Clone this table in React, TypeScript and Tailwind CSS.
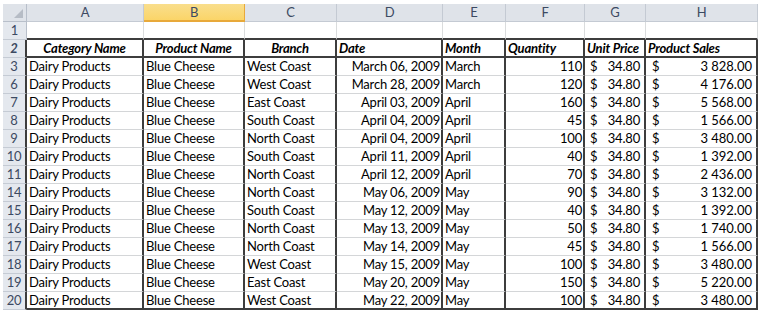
import React from 'react';

type Row = [number, string, string, string, string, string, number, string, string];

const rows: Row[] = [
    [3, 'Dairy Products', 'Blue Cheese', 'West Coast', 'March 06, 2009', 'March', 110, '34.80', '3\u202F828.00'],
    [6, 'Dairy Products', 'Blue Cheese', 'West Coast', 'March 28, 2009', 'March', 120, '34.80', '4\u202F176.00'],
    [7, 'Dairy Products', 'Blue Cheese', 'East Coast', 'April 03, 2009', 'April', 160, '34.80', '5\u202F568.00'],
    [8, 'Dairy Products', 'Blue Cheese', 'South Coast', 'April 04, 2009', 'April', 45, '34.80', '1\u202F566.00'],
    [9, 'Dairy Products', 'Blue Cheese', 'North Coast', 'April 04, 2009', 'April', 100, '34.80', '3\u202F480.00'],
    [10, 'Dairy Products', 'Blue Cheese', 'South Coast', 'April 11, 2009', 'April', 40, '34.80', '1\u202F392.00'],
    [11, 'Dairy Products', 'Blue Cheese', 'North Coast', 'April 12, 2009', 'April', 70, '34.80', '2\u202F436.00'],
    [14, 'Dairy Products', 'Blue Cheese', 'North Coast', 'May 06, 2009', 'May', 90, '34.80', '3\u202F132.00'],
    [15, 'Dairy Products', 'Blue Cheese', 'South Coast', 'May 12, 2009', 'May', 40, '34.80', '1\u202F392.00'],
    [16, 'Dairy Products', 'Blue Cheese', 'North Coast', 'May 13, 2009', 'May', 50, '34.80', '1\u202F740.00'],
    [17, 'Dairy Products', 'Blue Cheese', 'North Coast', 'May 14, 2009', 'May', 45, '34.80', '1\u202F566.00'],
    [18, 'Dairy Products', 'Blue Cheese', 'West Coast', 'May 15, 2009', 'May', 100, '34.80', '3\u202F480.00'],
    [19, 'Dairy Products', 'Blue Cheese', 'East Coast', 'May 20, 2009', 'May', 150, '34.80', '5\u202F220.00'],
    [20, 'Dairy Products', 'Blue Cheese', 'West Coast', 'May 22, 2009', 'May', 100, '34.80', '3\u202F480.00'],
];

// column widths: A..H
const colW = ['w-[117px]', 'w-[101px]', 'w-[92px]', 'w-[106px]', 'w-[63px]', 'w-[79px]', 'w-[61px]', 'w-[112px]'];
const letters = ['A', 'B', 'C', 'D', 'E', 'F', 'G', 'H'];

const RowHead: React.FC<{ n: number; dark?: boolean }> = ({ n, dark }) => (
    <div
        className={
            'w-[24px] shrink-0 flex items-center justify-center bg-[#e4e8ee] text-[#3c4a62] border-b border-b-[#c5cbd4] ' +
            (dark ? 'border-r-2 border-r-[#3d3d3d]' : 'border-r border-r-[#b8bfca]')
        }
    >
        {n}
    </div>
);

const App: React.FC = () => {
    return (
        <div className="w-[763px] h-[316px] bg-white pt-[4px] pl-[3px] overflow-hidden whitespace-nowrap font-['Lato','Liberation_Sans',sans-serif] text-[13px] tracking-[-0.2px] leading-none text-black">
            {/* column letters */}
            <div className="flex h-[18px]">
                <div className="w-[24px] shrink-0 relative bg-[#dfe3e9] border-r border-b border-[#b8bfca]">
                    <div className="absolute right-[3px] bottom-[3px] w-0 h-0 border-l-[9px] border-l-transparent border-b-[9px] border-b-[#b6bcc5]" />
                </div>
                {letters.map((l, i) => (
                    <div
                        key={l}
                        className={
                            colW[i] +
                            ' shrink-0 flex items-center justify-center ' +
                            (l === 'B'
                                ? 'bg-gradient-to-b from-[#f9de8c] to-[#fbd568] text-[#3c4a62] border-r border-b-2 border-[#e8a93a]'
                                : 'bg-[#dfe3e9] text-[#3c4a62] border-r border-b border-[#c4cad3]')
                        }
                    >
                        {l}
                    </div>
                ))}
            </div>

            {/* row 1 (blank) */}
            <div className="flex h-[18px]">
                <RowHead n={1} />
                {letters.map((l, i) => (
                    <div key={l} className={colW[i] + ' shrink-0 border-r border-r-[#dadcdd] border-b-2 border-b-[#3d3d3d]'} />
                ))}
            </div>

            {/* row 2 (table headings) */}
            <div className="flex h-[18px] font-bold italic">
                <RowHead n={2} dark />
                <div className={colW[0] + ' shrink-0 flex items-center justify-center border-r-2 border-r-[#3d3d3d] border-b-2 border-b-[#3d3d3d]'}>Category Name</div>
                <div className={colW[1] + ' shrink-0 flex items-center justify-center border-r-2 border-r-[#3d3d3d] border-b-2 border-b-[#3d3d3d]'}>Product Name</div>
                <div className={colW[2] + ' shrink-0 flex items-center justify-center border-r-2 border-r-[#3d3d3d] border-b-2 border-b-[#3d3d3d]'}>Branch</div>
                <div className={colW[3] + ' shrink-0 flex items-center pl-[2px] border-r-2 border-r-[#3d3d3d] border-b-2 border-b-[#3d3d3d]'}>Date</div>
                <div className={colW[4] + ' shrink-0 flex items-center pl-[2px] border-r-2 border-r-[#3d3d3d] border-b-2 border-b-[#3d3d3d]'}>Month</div>
                <div className={colW[5] + ' shrink-0 flex items-center pl-[2px] border-r-2 border-r-[#3d3d3d] border-b-2 border-b-[#3d3d3d]'}>Quantity</div>
                <div className={colW[6] + ' shrink-0 flex items-center pl-[2px] border-r-2 border-r-[#3d3d3d] border-b-2 border-b-[#3d3d3d]'}>Unit Price</div>
                <div className={colW[7] + ' shrink-0 flex items-center pl-[2px] border-r-2 border-r-[#3d3d3d] border-b-2 border-b-[#3d3d3d]'}>Product Sales</div>
            </div>

            {/* data rows */}
            {rows.map((r, idx) => {
                const last = idx === rows.length - 1;
                const cell =
                    ' shrink-0 flex items-center border-r-2 border-r-[#3d3d3d] ' +
                    (last ? 'border-b-2 border-b-[#3d3d3d]' : 'border-b border-b-[#d4d6d8]');
                return (
                    <div key={r[0]} className="flex h-[18px]">
                        <RowHead n={r[0]} dark />
                        <div className={colW[0] + cell + ' pl-[2px]'}>{r[1]}</div>
                        <div className={colW[1] + cell + ' pl-[2px]'}>{r[2]}</div>
                        <div className={colW[2] + cell + ' pl-[2px]'}>{r[3]}</div>
                        <div className={colW[3] + cell + ' justify-end pr-[1px]'}>{r[4]}</div>
                        <div className={colW[4] + cell + ' pl-[2px]'}>{r[5]}</div>
                        <div className={colW[5] + cell + ' justify-end pr-[1px]'}>{r[6]}</div>
                        <div className={colW[6] + cell + ' justify-between pl-[5px] pr-[4px]'}>
                            <span>$</span>
                            <span>{r[7]}</span>
                        </div>
                        <div className={colW[7] + cell + ' justify-between pl-[6px] pr-[4px]'}>
                            <span>$</span>
                            <span>{r[8]}</span>
                        </div>
                    </div>
                );
            })}
        </div>
    );
};

export default App;
